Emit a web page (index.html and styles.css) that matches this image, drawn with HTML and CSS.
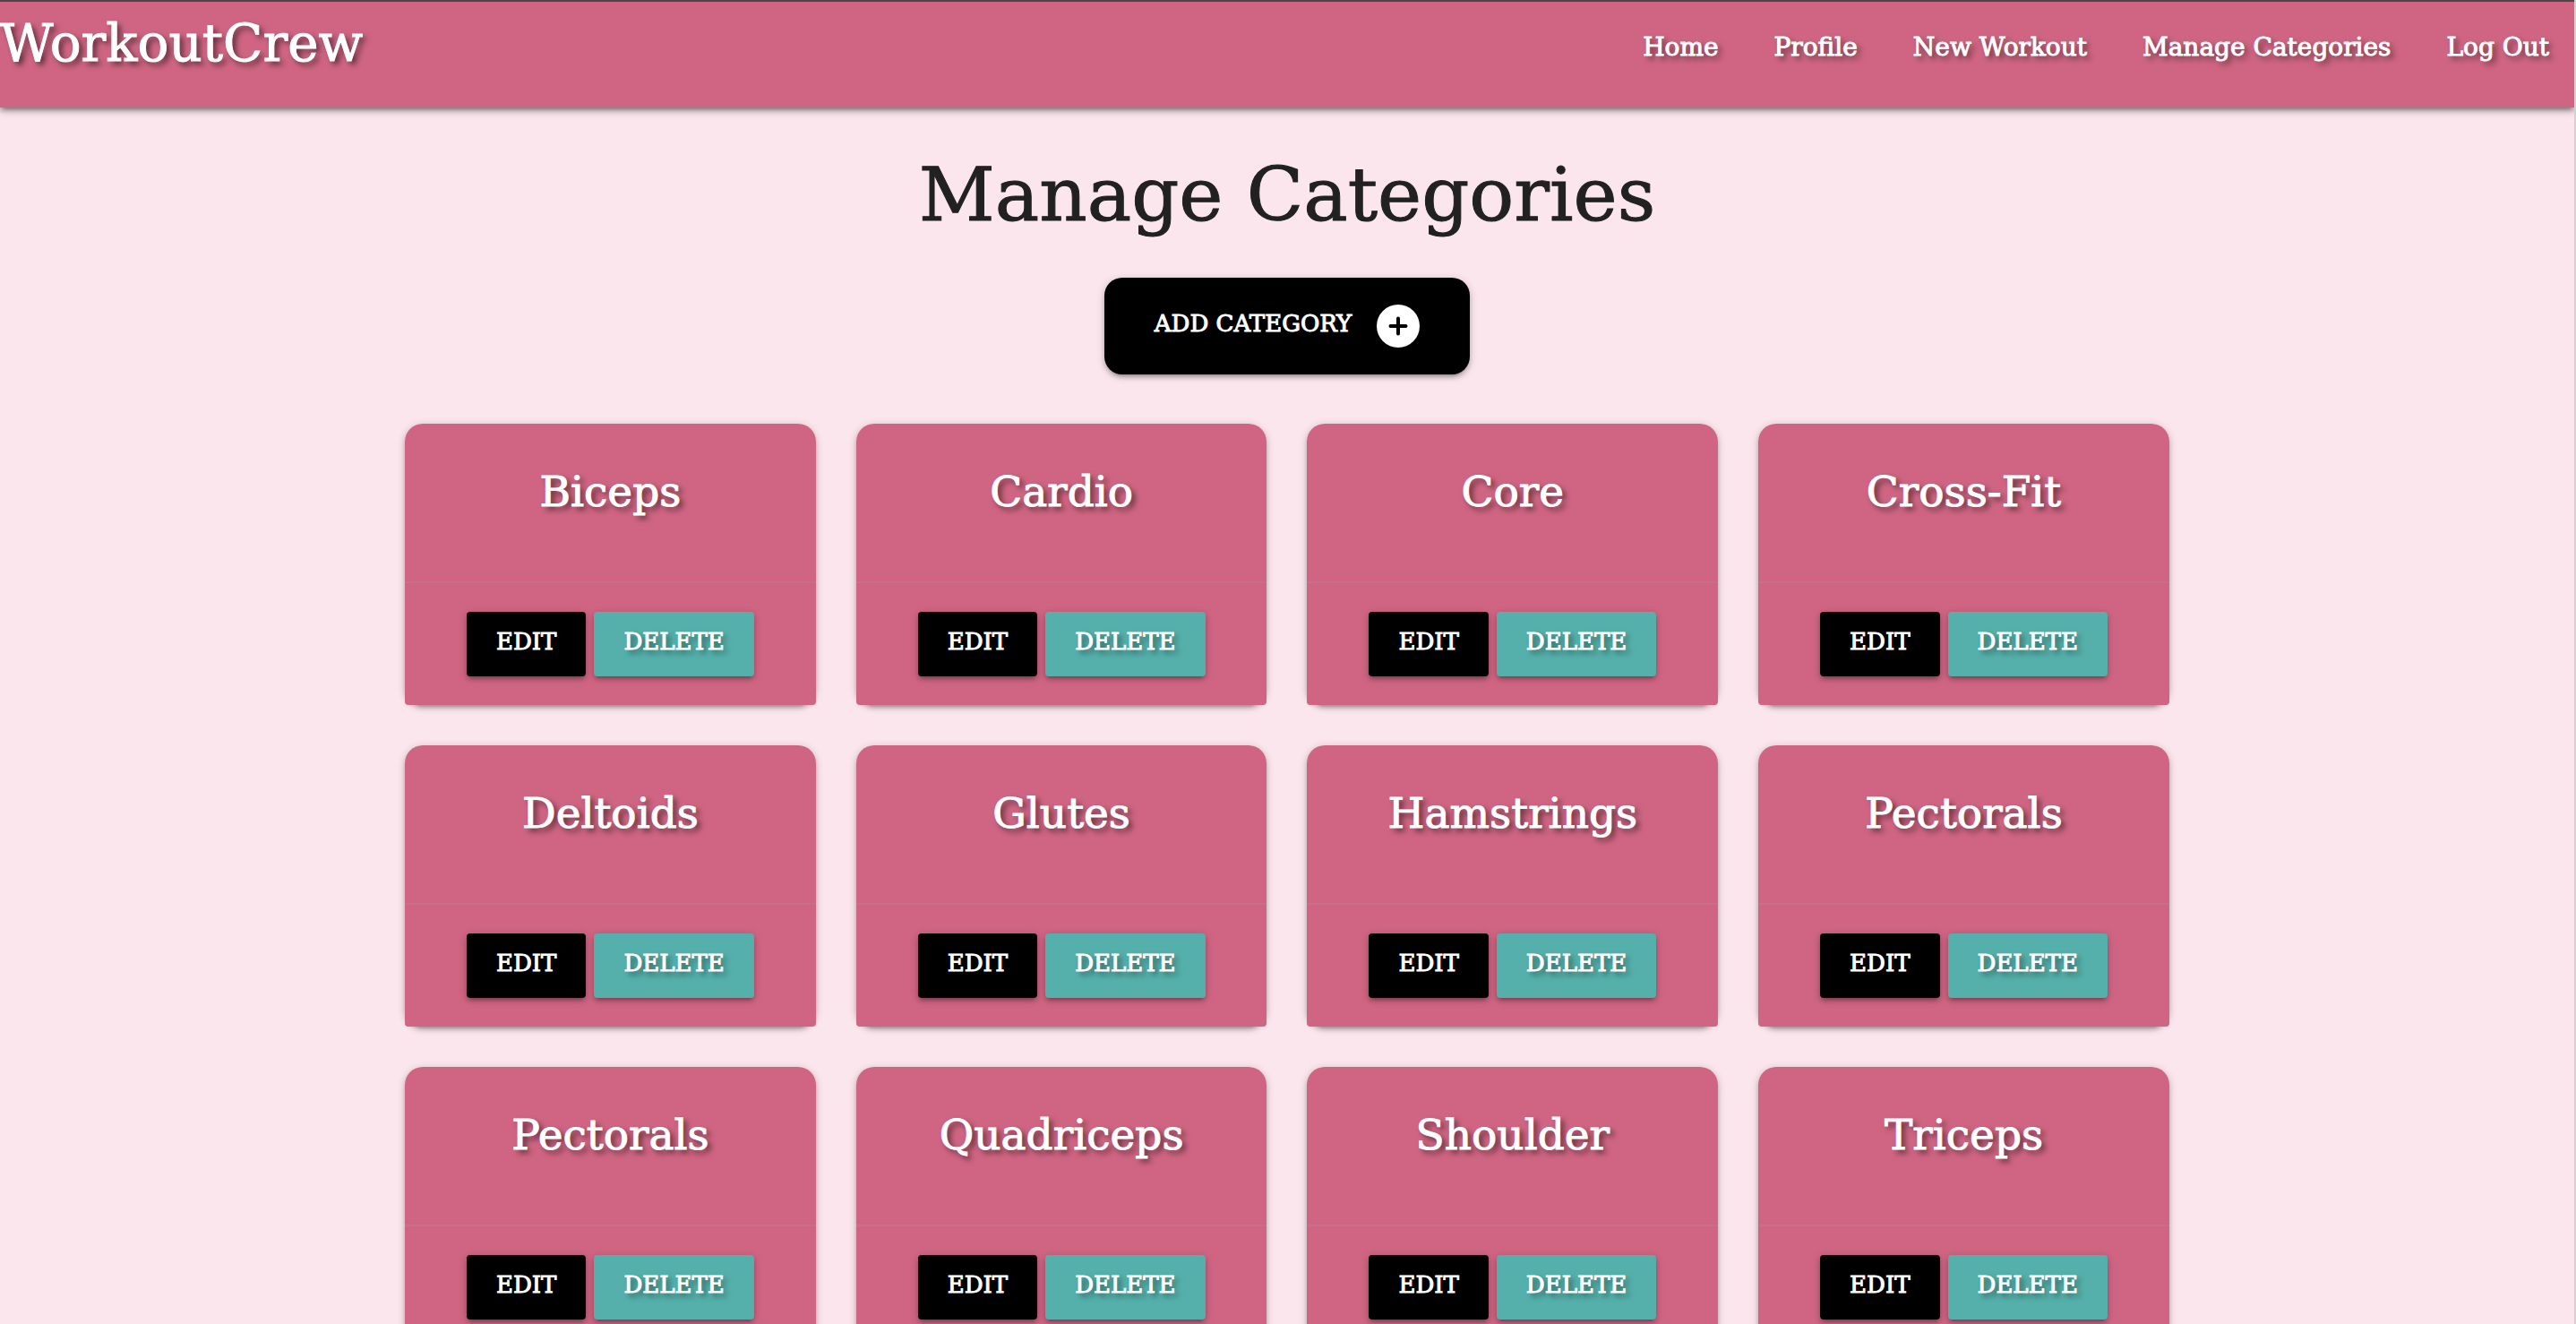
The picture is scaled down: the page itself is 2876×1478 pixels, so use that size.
FILE: index.html
```html
<!DOCTYPE html>
<html lang="en">
<head>
<meta charset="utf-8">
<title>WorkoutCrew</title>
<link rel="stylesheet" href="styles.css">
</head>
<body>
<header class="navbar">
  <a class="brand" href="#">WorkoutCrew</a>
  <nav>
    <ul class="nav-links">
      <li><a href="#">Home</a></li>
      <li><a href="#">Profile</a></li>
      <li><a href="#">New Workout</a></li>
      <li><a href="#">Manage Categories</a></li>
      <li><a href="#">Log Out</a></li>
    </ul>
  </nav>
</header>
<main class="container">
  <h1>Manage Categories</h1>
  <button class="btn btn-add" type="button"><span>Add Category</span>
    <svg class="icon" viewBox="0 0 48 48" aria-hidden="true"><circle cx="24" cy="24" r="24" fill="#fff"/><path d="M24 15.500v17M15.500 24h17" stroke="#000" stroke-width="4" stroke-linecap="round"/></svg>
  </button>
  <div class="cards">
    <article class="card"><h2>Biceps</h2><div class="actions"><button class="btn" type="button">Edit</button><button class="btn btn-delete" type="button">Delete</button></div></article>
    <article class="card"><h2>Cardio</h2><div class="actions"><button class="btn" type="button">Edit</button><button class="btn btn-delete" type="button">Delete</button></div></article>
    <article class="card"><h2>Core</h2><div class="actions"><button class="btn" type="button">Edit</button><button class="btn btn-delete" type="button">Delete</button></div></article>
    <article class="card"><h2>Cross-Fit</h2><div class="actions"><button class="btn" type="button">Edit</button><button class="btn btn-delete" type="button">Delete</button></div></article>
    <article class="card"><h2>Deltoids</h2><div class="actions"><button class="btn" type="button">Edit</button><button class="btn btn-delete" type="button">Delete</button></div></article>
    <article class="card"><h2>Glutes</h2><div class="actions"><button class="btn" type="button">Edit</button><button class="btn btn-delete" type="button">Delete</button></div></article>
    <article class="card"><h2>Hamstrings</h2><div class="actions"><button class="btn" type="button">Edit</button><button class="btn btn-delete" type="button">Delete</button></div></article>
    <article class="card"><h2>Pectorals</h2><div class="actions"><button class="btn" type="button">Edit</button><button class="btn btn-delete" type="button">Delete</button></div></article>
    <article class="card"><h2>Pectorals</h2><div class="actions"><button class="btn" type="button">Edit</button><button class="btn btn-delete" type="button">Delete</button></div></article>
    <article class="card"><h2>Quadriceps</h2><div class="actions"><button class="btn" type="button">Edit</button><button class="btn btn-delete" type="button">Delete</button></div></article>
    <article class="card"><h2>Shoulder</h2><div class="actions"><button class="btn" type="button">Edit</button><button class="btn btn-delete" type="button">Delete</button></div></article>
    <article class="card"><h2>Triceps</h2><div class="actions"><button class="btn" type="button">Edit</button><button class="btn btn-delete" type="button">Delete</button></div></article>
  </div>
</main>
</body>
</html>
```
FILE: styles.css
```css
:root {
  --pink: #cf6582;
  --text-shadow: 4px 4px 6px rgba(0, 0, 0, 0.6);
  --shadow: 0 4px 4px rgba(0, 0, 0, 0.14), 0 6px 2px -4px rgba(0, 0, 0, 0.12), 0 2px 10px rgba(0, 0, 0, 0.2);
}

* {
  box-sizing: border-box;
}

body {
  margin: 0;
  border-right: 2px solid #dccbd1;
  background: #fae6ec;
  color: #212121;
  font-family: "DejaVu Serif", serif;
  -webkit-text-stroke: 1px currentColor;
}

h1,
h2 {
  margin: 0;
  font-weight: 400;
}

a {
  color: inherit;
  text-decoration: none;
}

.navbar {
  display: flex;
  justify-content: space-between;
  height: 120px;
  padding-right: 28px;
  border-top: 2px solid #4f444b;
  background: var(--pink);
  color: #fff;
  text-shadow: var(--text-shadow);
  box-shadow: 0 4px 4px rgba(0, 0, 0, 0.14), 0 6px 2px -4px rgba(0, 0, 0, 0.12), 0 2px 10px rgba(0, 0, 0, 0.4);
}

.brand {
  font-size: 58px;
  line-height: 92px;
}

.nav-links {
  display: flex;
  gap: 62px;
  margin: 0;
  padding: 0;
  list-style: none;
  font-size: 28px;
  line-height: 102px;
}

.container {
  width: 70%;
  margin: 0 auto;
  padding: 0 21px 44px;
  text-align: center;
}

h1 {
  padding-top: 48px;
  font-size: 83px;
  line-height: 100px;
}

.btn {
  display: inline-flex;
  align-items: center;
  height: 72px;
  padding: 0 33px 6px;
  border: 0;
  border-radius: 4px;
  background: #000;
  color: #fff;
  font: inherit;
  font-size: 26px;
  text-transform: uppercase;
  box-shadow: var(--shadow);
}

.btn-add {
  gap: 28px;
  height: 108px;
  margin: 42px 0 55px;
  padding: 0 56px;
  border-radius: 20px;
}

.btn-add span {
  padding-bottom: 6px;
}

.icon {
  width: 48px;
  height: 48px;
}

.btn-delete {
  background: #55b0ab;
  text-shadow: var(--text-shadow);
}

.cards {
  display: grid;
  grid-template-columns: repeat(4, 1fr);
  gap: 45px;
}

.card {
  border-radius: 20px;
  box-shadow: var(--shadow);
}

.card h2 {
  height: 176px;
  padding-top: 46px;
  border-radius: 20px 20px 0 0;
  background: var(--pink);
  color: #fff;
  font-size: 47px;
  line-height: 60px;
  text-shadow: var(--text-shadow);
}

.actions {
  display: flex;
  justify-content: center;
  gap: 9px;
  padding: 32px 0;
  border-top: 2px solid #c96f89;
  border-radius: 0 0 4px 4px;
  background: var(--pink);
}
```
